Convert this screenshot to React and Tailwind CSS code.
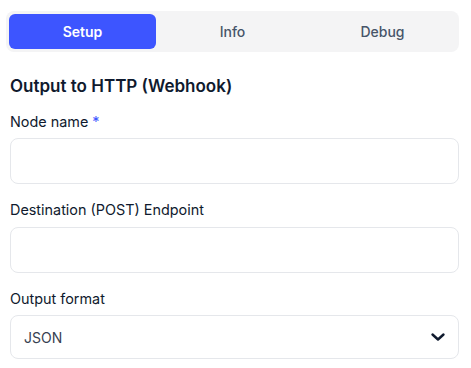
export default function App() {
  return (
    <div className="w-[471px] h-[368px] bg-white pl-[6px] pr-[12px] pt-[11px]" style={{ fontFamily: "Inter, 'Noto Sans', sans-serif" }}>
      <div className="grid grid-cols-3 gap-[3px] p-[3px] rounded-[8px] bg-[#f4f4f5] h-[41px]">
        <div className="flex items-center justify-center rounded-[6px] bg-[#3d55ff] text-white text-[14px] font-semibold">Setup</div>
        <div className="flex items-center justify-center text-[#475569] text-[14px] font-medium">Info</div>
        <div className="flex items-center justify-center text-[#475569] text-[14px] font-medium">Debug</div>
      </div>
      <div className="pl-[4px]">
        <h2 className="mt-[20px] text-[17px] leading-[28px] font-semibold text-[#0f1a2e]">Output to HTTP (Webhook)</h2>
        <label className="block mt-[12px] text-[14.4px] leading-[20px] font-normal text-[#0f1a2e]">
          Node name <span className="text-[#3d55ff]">*</span>
        </label>
        <div className="mt-[6px] h-[46px] rounded-[8px] border border-[#e5e7eb] bg-white"></div>
        <label className="block mt-[16px] text-[14.4px] leading-[20px] font-normal text-[#0f1a2e]">Destination (POST) Endpoint</label>
        <div className="mt-[7px] h-[46px] rounded-[8px] border border-[#e5e7eb] bg-white"></div>
        <label className="block mt-[16px] text-[14.4px] leading-[20px] font-normal text-[#0f1a2e]">Output format</label>
        <div className="mt-[6px] h-[44px] rounded-[8px] border border-[#e5e7eb] bg-white flex items-center justify-between pl-[13px] pr-[8px]">
          <span className="text-[14px] text-[#374151]">JSON</span>
          <svg width="24" height="24" viewBox="0 0 24 24" fill="none" stroke="#0f1a2e" strokeWidth="2.4" strokeLinecap="round" strokeLinejoin="round">
            <polyline points="6.5,9.5 12,14.5 17.5,9.5" />
          </svg>
        </div>
      </div>
    </div>
  );
}
